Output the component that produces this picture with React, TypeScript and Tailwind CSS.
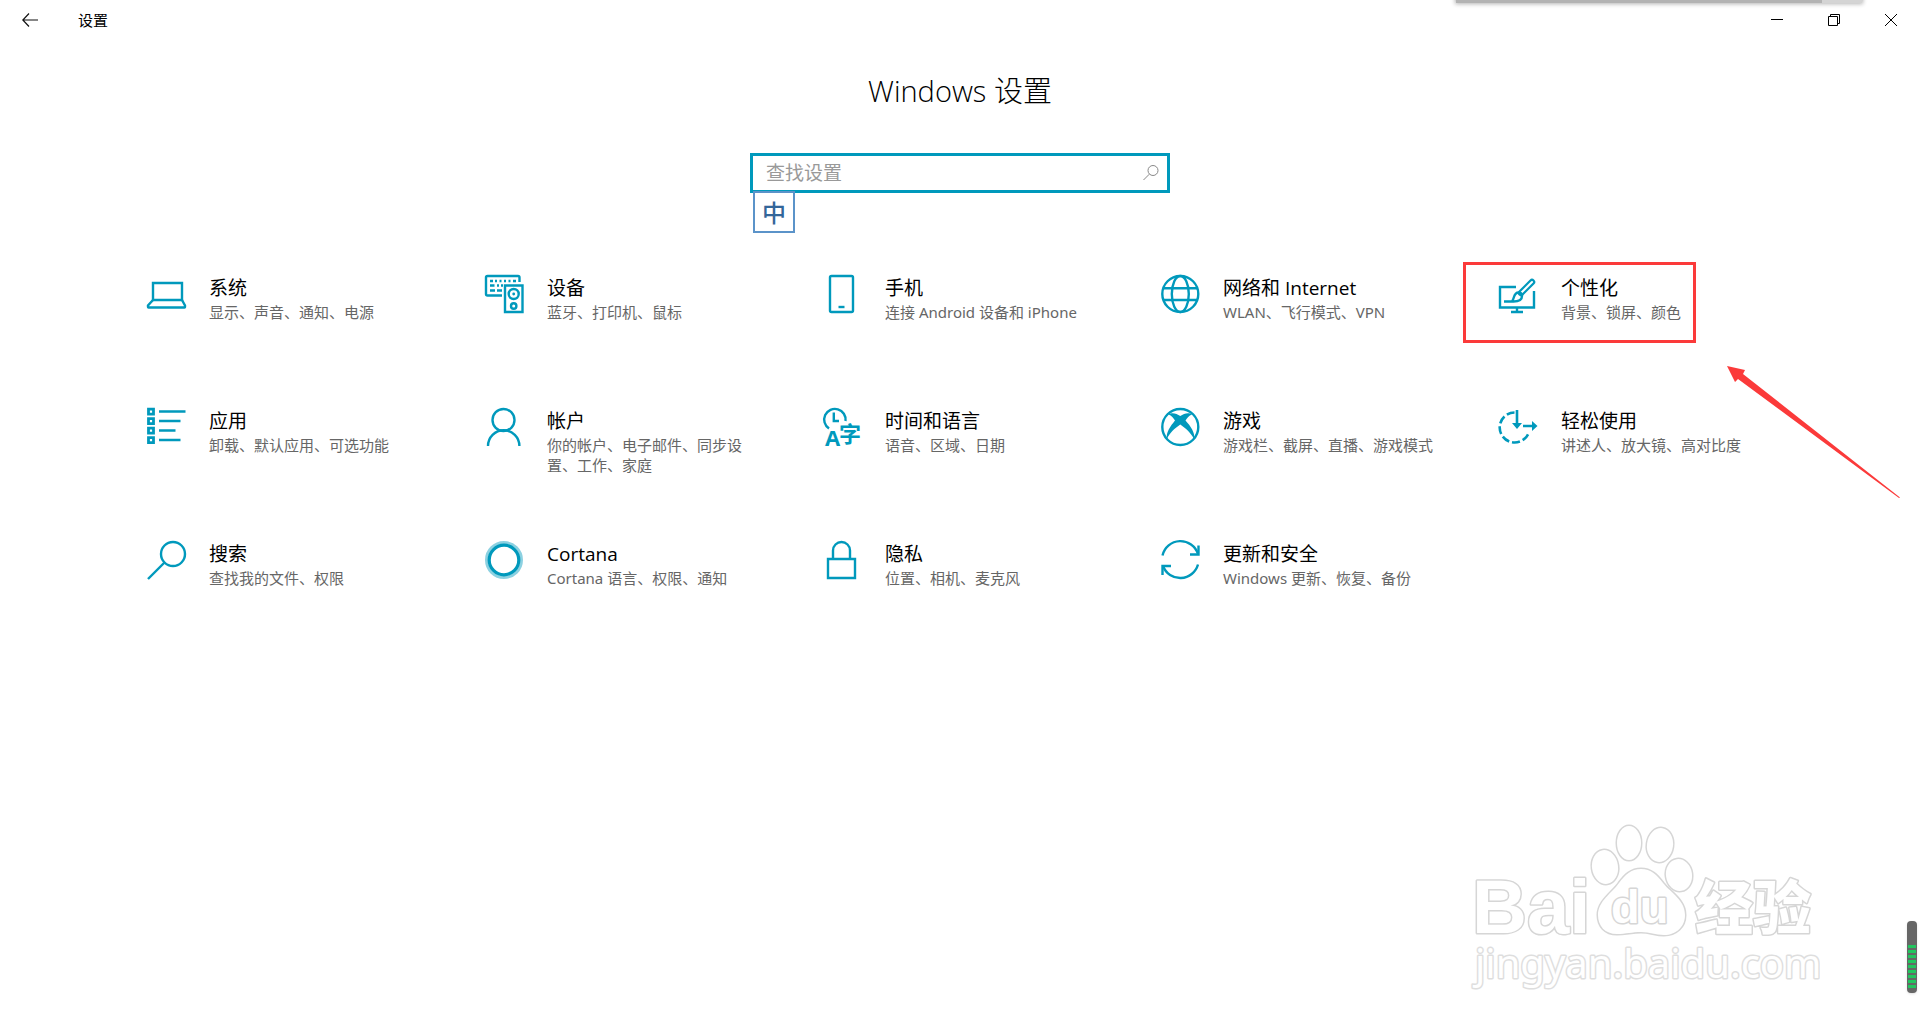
import type { ReactNode } from "react"

type Category = {
  id: string
  title: string
  description: string
  icon: ReactNode
  highlighted?: boolean
}

const LaptopIcon = () => (
  <>
    <path d="M6 25V8h29v17z" />
    <path d="M6 25 1 30.500V32q0 .5.5.5h36q.5 0 .5-.5v-1.500L35 25" />
  </>
)

const DevicesIcon = () => (
  <>
    <path d="M17 20.500H2.500q-1.500 0-1.500-1.500V2.500Q1 1 2.500 1h30.500q1.500 0 1.500 1.500V7" />
    <path d="M5 6h3M10 6h2M14.500 6h2M19 6h2M23.500 6h2M28 6h3M5 10.500h4.500M12 10.500h2M16 10.500h2M5 15.500h5M12 15.500h5" />
    <path d="M20 10.500h17.500V37H20z" />
    <circle cx="28.700" cy="19" r="5" />
    <circle cx="28.700" cy="19" r="1.400" fill="currentColor" stroke="none" />
    <circle cx="28.700" cy="31" r="2.700" />
  </>
)

const PhoneIcon = () => (
  <>
    <rect x="7" y="1" width="23" height="36" rx="1.500" />
    <path d="M15.500 32h6" />
  </>
)

const GlobeIcon = () => (
  <>
    <circle cx="19.300" cy="19" r="18" />
    <ellipse cx="19.300" cy="19" rx="8.500" ry="18" />
    <path d="M2.500 13.300h33.600M2.500 25h33.600" />
  </>
)

const PersonalizeIcon = () => (
  <>
    <path d="M17 12H1v20.500h34V16" />
    <path d="M18 32v5M12 37h12" />
    <path d="M22 18 33 7" strokeWidth="6.500" strokeLinecap="round" />
    <path d="M22 18 33 7" stroke="#fff" strokeWidth="2" strokeLinecap="round" />
    <path d="M5 26.500h9.500c5 0 8.500-2 8.500-5.500 0-2-1.500-3.500-3.500-3.500-5 0-4 6-6.500 9" />
    <path d="M20 17.500l3.500 3.500" />
  </>
)

const AppsIcon = () => (
  <>
    <path
      d="M1.500 1.200h5v5h-5zM1.500 10.700h5v5h-5zM1.500 20.200h5v5h-5zM1.500 29.700h5v5h-5z"
      strokeWidth="2.800"
    />
    <path d="M12 3.500h26.500M12 13h21.500M12 22.500h16.500M12 32h21.500" />
  </>
)

const AccountIcon = () => (
  <>
    <circle cx="18.500" cy="12" r="11" />
    <path d="M3 38a15.700 15.700 0 0 1 31.400 0" />
  </>
)

const TimeLanguageIcon = () => (
  <>
    <path d="M6 20.500A10.700 10.700 0 1 1 22.500 13" />
    <path d="M10.800 4.500V13H16" />
    <text x="2" y="38" fill="currentColor" stroke="none" fontSize="22" fontWeight="700">
      A
    </text>
    <text x="16" y="34" fill="currentColor" stroke="none" fontSize="22" fontWeight="700">
      字
    </text>
  </>
)

const XboxIcon = () => (
  <>
    <circle cx="19.300" cy="19" r="18" />
    <path
      d="M7.500 6.500C11 4 15.500 5.500 19.300 8 23 5.500 27.500 4 31 6.500c-3 1-5 3.500-6.500 6C29.500 18 34.500 25 33 31c-3-6-8.500-11-13.700-14.500C14 20 8.500 25 6 31 4.500 25 9.500 18 14 12.500c-1.500-2.500-3.500-5-6.500-6z"
      fill="currentColor"
      stroke="none"
    />
  </>
)

const EaseOfAccessIcon = () => (
  <>
    <path d="M15.500 4.500A15 15 0 1 0 30 24" strokeDasharray="8 3" strokeWidth="2.600" />
    <path d="M18 2v16M24 18h12" strokeWidth="2.600" />
    <path d="M13 15h10L18 21zM33 13v10l5.500-5z" fill="currentColor" stroke="none" />
  </>
)

const SearchIcon = () => (
  <>
    <circle cx="26" cy="13" r="12" />
    <path d="M17.500 21.500 1 38" />
  </>
)

const CortanaIcon = () => (
  <>
    <circle cx="19" cy="19" r="17.500" strokeWidth="3" opacity="0.450" />
    <circle cx="19" cy="19" r="14.800" strokeWidth="3.200" />
  </>
)

const LockIcon = () => (
  <>
    <path d="M5 18h27v19H5z" />
    <path d="M10 18V9.500a8.500 8.500 0 0 1 17 0V18" />
  </>
)

const UpdateIcon = () => (
  <>
    <path d="M1.500 14.500a18.400 18.400 0 0 1 35.500-1.500M37 23.500A18.400 18.400 0 0 1 2 25" />
    <path d="M29 13.500h8.500V4.500M10 25H1.500v9" />
  </>
)

const categories: Category[] = [
  { id: "system", title: "系统", description: "显示、声音、通知、电源", icon: <LaptopIcon /> },
  { id: "devices", title: "设备", description: "蓝牙、打印机、鼠标", icon: <DevicesIcon /> },
  { id: "phone", title: "手机", description: "连接 Android 设备和 iPhone", icon: <PhoneIcon /> },
  { id: "network", title: "网络和 Internet", description: "WLAN、飞行模式、VPN", icon: <GlobeIcon /> },
  {
    id: "personalization",
    title: "个性化",
    description: "背景、锁屏、颜色",
    icon: <PersonalizeIcon />,
    highlighted: true,
  },
  { id: "apps", title: "应用", description: "卸载、默认应用、可选功能", icon: <AppsIcon /> },
  { id: "accounts", title: "帐户", description: "你的帐户、电子邮件、同步设置、工作、家庭", icon: <AccountIcon /> },
  { id: "time", title: "时间和语言", description: "语音、区域、日期", icon: <TimeLanguageIcon /> },
  { id: "gaming", title: "游戏", description: "游戏栏、截屏、直播、游戏模式", icon: <XboxIcon /> },
  { id: "ease", title: "轻松使用", description: "讲述人、放大镜、高对比度", icon: <EaseOfAccessIcon /> },
  { id: "search", title: "搜索", description: "查找我的文件、权限", icon: <SearchIcon /> },
  { id: "cortana", title: "Cortana", description: "Cortana 语言、权限、通知", icon: <CortanaIcon /> },
  { id: "privacy", title: "隐私", description: "位置、相机、麦克风", icon: <LockIcon /> },
  { id: "update", title: "更新和安全", description: "Windows 更新、恢复、备份", icon: <UpdateIcon /> },
]

const TitleBar = () => (
  <header className="flex h-10 items-center pr-px">
    <button type="button" aria-label="返回" className="flex h-10 w-15 items-center justify-center">
      <svg width="16" height="14" viewBox="0 0 16 14" fill="none" stroke="#111" strokeWidth="1.200">
        <path d="M7 .5.8 7 7 13.500M.8 7H16" />
      </svg>
    </button>
    <span className="pl-[18px] text-[15px] leading-5">设置</span>
    <div className="ml-auto flex">
      <button type="button" aria-label="最小化" className="flex h-10 w-[57px] items-center justify-center">
        <svg width="12" height="12" viewBox="0 0 12 12" stroke="#000">
          <path d="M0 5.500h12" />
        </svg>
      </button>
      <button type="button" aria-label="还原" className="flex h-10 w-[57px] items-center justify-center">
        <svg width="12" height="12" viewBox="0 0 12 12" fill="none" stroke="#000">
          <path d="M.5 2.500h9v9h-9zM2.500 2.500v-2h9v9h-2" />
        </svg>
      </button>
      <button type="button" aria-label="关闭" className="flex h-10 w-[57px] items-center justify-center">
        <svg width="12" height="12" viewBox="0 0 12 12" stroke="#000">
          <path d="M0 0l12 12M12 0 0 12" />
        </svg>
      </button>
    </div>
  </header>
)

const SearchBox = () => (
  <div className="relative mx-auto mt-[42px] w-full max-w-[420px]">
    <div className="flex h-10 items-center border-3 border-[#0099bc] pr-2 pl-[13px]">
      <input
        type="text"
        aria-label="查找设置"
        placeholder="查找设置"
        className="min-w-0 flex-1 text-[19px] leading-7 outline-none placeholder:text-[#999]"
      />
      <svg width="16" height="16" viewBox="0 0 16 16" fill="none" stroke="#888">
        <circle cx="10" cy="5.500" r="5" />
        <path d="M6.300 9.200.5 15" />
      </svg>
    </div>
    {/* input method indicator hanging under the text box */}
    <span className="absolute top-[38px] left-[3px] flex size-[42px] items-center justify-center border-2 border-[#5b93c9] bg-white pt-0.5 text-[24px] leading-8 font-medium text-[#336699]">
      中
    </span>
  </div>
)

const CategoryCard = ({ category }: { category: Category }) => (
  <a href={`#${category.id}`} className="relative flex h-[133px] items-start gap-[22px] pl-8">
    <svg
      width="40"
      height="40"
      viewBox="0 0 40 40"
      fill="none"
      stroke="currentColor"
      strokeWidth="2.400"
      className="shrink-0 overflow-visible text-[#0099bc]"
    >
      {category.icon}
    </svg>
    <span className="flex w-[218px] flex-col">
      <span className="text-[19px] leading-[27px]">{category.title}</span>
      <span className="font-['Noto_Sans','Noto_Sans_CJK_SC',sans-serif] text-[15px] leading-5 text-[#666]">
        {category.description}
      </span>
    </span>
    {category.highlighted && (
      <>
        <span className="absolute -top-[13px] -left-1 h-[81px] w-[233px] border-3 border-[#fb3a3a]" />
        <svg
          width="174"
          height="132"
          viewBox="0 0 174 132"
          className="pointer-events-none absolute top-[91px] left-[260px]"
        >
          <path d="M0 0l18 4-2 4 157 123.500-1 .5L11 13l-3 3z" fill="#fb3a3a" />
        </svg>
      </>
    )}
  </a>
)

const Watermark = () => (
  <svg
    width="350"
    height="170"
    viewBox="0 0 350 170"
    fill="#fff"
    stroke="#d6d6d6"
    strokeWidth="3"
    strokeLinejoin="round"
    paintOrder="stroke"
    className="pointer-events-none absolute right-[100px] bottom-[38px]"
  >
    <text x="2" y="111" fontFamily="Liberation Sans, sans-serif" fontSize="76" fontWeight="700">
      Bai
    </text>
    <ellipse cx="135" cy="45" rx="13" ry="17" transform="rotate(-8 135 45)" />
    <ellipse cx="159" cy="21" rx="12" ry="17" />
    <ellipse cx="190" cy="23" rx="13" ry="17" transform="rotate(8 190 23)" />
    <ellipse cx="209" cy="53" rx="13" ry="16" transform="rotate(-8 209 53)" />
    <path d="M171 47c10 0 16 6 22 14 8 10 22 17 22 32 0 12-9 20-21 20-9 0-14-3-23-3s-15 2-24 2c-12 0-19-8-19-19 0-14 14-22 21-32 6-8 12-14 22-14z" />
    <text x="141" y="101" fontFamily="Liberation Sans, sans-serif" fontSize="47" fontWeight="700">
      du
    </text>
    <text x="225" y="107" fontFamily="Noto Sans CJK SC, sans-serif" fontSize="58" fontWeight="900">
      经验
    </text>
    <text x="5" y="156" fontFamily="Noto Sans, sans-serif" fontSize="40" stroke="#dedede">
      jingyan.baidu.com
    </text>
  </svg>
)

const LevelMeter = () => (
  <div className="absolute right-[3px] bottom-[37px] flex h-[72px] w-2.5 flex-col justify-end rounded-sm bg-[#666] px-px pb-1 shadow-sm">
    <div className="h-11 bg-[repeating-linear-gradient(to_bottom,#22c55e_0_3px,#666_3px_5px)]" />
  </div>
)

const App = () => {
  return (
    <div
      lang="zh-CN"
      className="relative min-h-screen overflow-hidden bg-white font-['Open_Sans','Noto_Sans_CJK_SC',sans-serif] text-black"
    >
      <div className="absolute -top-2 right-[58px] flex h-[11px] w-[406px] bg-[#b3b3b3] shadow-[0_0_4px_1px_#b3b3b3]">
        <div className="ml-auto w-10 bg-[#d4d4d4]" />
      </div>
      <TitleBar />
      <main>
        <h1 className="mt-[31px] text-center text-[29px] leading-10 font-light">Windows 设置</h1>
        <SearchBox />
        <nav
          aria-label="设置类别"
          className="mt-[82px] grid grid-cols-[repeat(auto-fill,338px)] justify-center px-24"
        >
          {categories.map((category) => (
            <CategoryCard key={category.id} category={category} />
          ))}
        </nav>
      </main>
      <Watermark />
      <LevelMeter />
    </div>
  )
}

export default App
